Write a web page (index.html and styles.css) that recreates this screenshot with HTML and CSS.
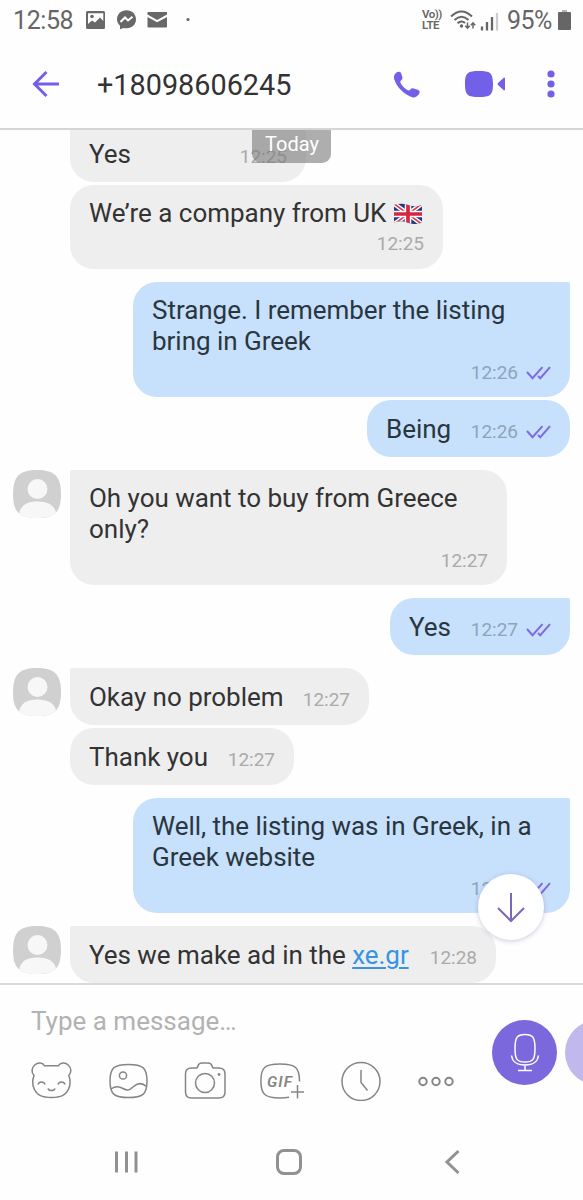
FILE: index.html
```html
<!DOCTYPE html>
<html lang="en">
<head>
<meta charset="utf-8">
<title>Chat</title>
<link rel="stylesheet" href="styles.css">
</head>
<body>
<svg class="defs" width="0" height="0">
  <defs>
    <symbol id="checks" viewBox="0 0 26 16"><path d="M2 7 7.500 13.200 17.500 2.200M13 11l2.300 2.200L25 2.200" fill="none" stroke="#7f6be0" stroke-width="2"/></symbol>
    <symbol id="person" viewBox="0 0 48 48"><path d="M24 0C41 0 48 6 48 24c0 10-2 15-5 18.500C38 47 33 48 24 48s-14-1-19-5.500C2 39 0 34 0 24 0 6 7 0 24 0Z" fill="#d0d0d0"/><circle cx="24.500" cy="19" r="10" fill="#f7f7f7"/><path d="M6 43.500C8 35 14 31.500 24.500 31.500S41 35 43 42.500C38 47 33 48 24 48S11 47.500 6 43.500Z" fill="#f7f7f7"/></symbol>
  </defs>
</svg>
<main class="screen">
  <header class="status">
    <span class="clock">12:58</span>
    <svg class="status-left" width="110" height="24" viewBox="0 0 110 24">
      <path fill="#686868" fill-rule="evenodd" d="M2.500 3h16q1.500 0 1.500 1.500v15q0 1.500-1.500 1.500h-16q-1.500 0-1.500-1.500v-15Q1 3 2.500 3Zm.5 2.300V16l4-3.500 3 2 5-5 3.300 3.500V5.300Z"/><circle cx="7" cy="8.500" r="1.800" fill="#686868"/>
      <path fill="#686868" d="M41.500 2.200c5.500 0 9.500 3.900 9.500 9.100s-4 9-9.500 9c-1 0-2-.1-2.900-.4L35 21.300v-3.600c-2-1.600-3-3.900-3-6.400 0-5.200 4-9.100 9.500-9.100Z"/><path d="m35.500 14 4.500-4.500 3 3 4.500-3.700" fill="none" stroke="#fff" stroke-width="2"/>
      <path fill="#686868" d="M62.500 4H82v2.500L72.200 12 62.500 6.500Zm0 5 9.700 5.300L82 9v9.500q0 1-1 1H63.500q-1 0-1-1Z"/>
      <circle cx="103" cy="11.500" r="1.600" fill="#686868"/>
    </svg>
    <span class="volte"><span>Vo))</span><span>LTE</span></span>
    <svg class="signal" width="52" height="24" viewBox="0 0 52 24">
      <g fill="none" stroke="#666" stroke-width="2"><path d="M1 8.500Q11.500-1.500 22 8.500M4.500 12Q11.500 5.500 18.500 12M7.500 15.300q4-3.600 7.500-.3"/></g>
      <circle cx="11.500" cy="18" r="1.700" fill="#666"/>
      <path d="M17.500 14.500V20m-2.200-2.300 2.200 2.500 2.200-2.500M23 20.500V15m-2.200 2.300 2.200-2.500 2.200 2.500" fill="none" stroke="#666" stroke-width="1.500"/>
      <path d="M32 18.500v4M37 14v8.500M42 9v13.500" stroke="#666" stroke-width="2.300"/><path d="M47 5v17.500" stroke="#ccc" stroke-width="2.300"/>
    </svg>
    <span class="percent">95%</span>
    <svg class="battery" width="13" height="20" viewBox="0 0 13 20"><path fill="#b5b5b5" d="M4 0h5v3H4z"/><rect y="2" width="13" height="18" rx="1" fill="#666"/></svg>
  </header>

  <nav class="topbar">
    <svg class="back" width="28" height="28" viewBox="0 0 28 28"><path d="M27 14H3M14.500 2 2.500 14l12 12" fill="none" stroke="#7360e8" stroke-width="3"/></svg>
    <h1 class="number">+18098606245</h1>
    <svg class="phone" width="27" height="27" viewBox="0 0 27 27"><path fill="#7360e8" d="M1.200 4.500C2 2 4 .7 6 .7c1.400 0 1.900.7 2.400 2.200l.9 3.200c.4 1.600-.1 2.600-1.300 3.400-1 .7-.8 1.600-.1 2.900 1.700 2.800 3.700 4.900 6.600 6.700 1.300.7 2 .6 2.800-.5.900-1.200 2-1.600 3.400-1.200l4 1.400c1.400.5 2 1.200 1.900 2.500-.4 2.300-2.300 4.300-4.800 5-1.100.3-2.200.2-3.300-.3C9.500 22.300 3.800 16 1.200 8.300.8 7 .8 5.800 1.200 4.500Z"/></svg>
    <svg class="video" width="42" height="28" viewBox="0 0 42 28"><path fill="#7360e8" d="M15 1c11 0 14 1.500 14 13s-3 13-14 13S1 25.500 1 14 4 1 15 1ZM40 7.500q1 0 1 1v11q0 1-1 1L34 15q-1-1 0-2Z"/></svg>
    <svg class="more" width="8" height="28" viewBox="0 0 8 28"><g fill="#7360e8"><circle cx="4" cy="4" r="3.600"/><circle cx="4" cy="14" r="3.600"/><circle cx="4" cy="24" r="3.600"/></g></svg>
  </nav>

  <section class="chat">
    <div class="day">Today</div>
    <div class="row first"><div class="bubble single w236"><p>Yes</p><time>12:25</time></div></div>
    <div class="row"><div class="bubble w373"><p>We’re a company from UK <svg class="flag" width="30" height="22" viewBox="0 0 30 22"><defs><clipPath id="wave"><path d="M1 2Q8-.5 15 2t14 0v17.500q-7 3-14 .3T1 19.500Z"/></clipPath></defs><g clip-path="url(#wave)"><path fill="#26377e" d="M0 0h30v22H0z"/><path d="m0 0 30 22M30 0 0 22" stroke="#fff" stroke-width="4.500"/><path d="m0 0 30 22M30 0 0 22" stroke="#d63b50" stroke-width="1.700"/><path d="M15 0v22M0 11h30" stroke="#fff" stroke-width="6.500"/><path d="M15 0v22M0 11h30" stroke="#d52640" stroke-width="3.700"/></g></svg></p><time>12:25</time></div></div>
    <div class="row out turn"><div class="bubble head w437"><p>Strange. I remember the listing<br>bring in Greek</p><time>12:26<svg class="checks"><use href="#checks"/></svg></time></div></div>
    <div class="row out"><div class="bubble single w203"><p>Being</p><time>12:26<svg class="checks"><use href="#checks"/></svg></time></div></div>
    <div class="row turn"><svg class="avatar"><use href="#person"/></svg><div class="bubble head w437"><p>Oh you want to buy from Greece<br>only?</p><time>12:27</time></div></div>
    <div class="row out turn"><div class="bubble head-round single w180"><p>Yes</p><time>12:27<svg class="checks"><use href="#checks"/></svg></time></div></div>
    <div class="row turn"><svg class="avatar"><use href="#person"/></svg><div class="bubble head single w299"><p>Okay no problem</p><time>12:27</time></div></div>
    <div class="row"><div class="bubble single w224"><p>Thank you</p><time>12:27</time></div></div>
    <div class="row out turn"><div class="bubble head w437"><p>Well, the listing was in Greek, in a<br>Greek website</p><time>12:28<svg class="checks"><use href="#checks"/></svg></time></div></div>
    <div class="row turn"><svg class="avatar"><use href="#person"/></svg><div class="bubble head single w426"><p>Yes we make ad in the <a class="link">xe.gr</a></p><time>12:28</time></div></div>
    <div class="jump"><svg width="32" height="34" viewBox="0 0 32 34"><path d="M16 3v28M3 18l13 13 13-13" fill="none" stroke="#7b68bd" stroke-width="2"/></svg></div>
  </section>

  <section class="composer">
    <div class="entry">
      <div class="placeholder">Type a message…</div>
      <div class="tools">
        <svg width="44" height="40" viewBox="0 0 44 40"><path d="M15.500 4.800h14C31 1.500 36 1 39.300 4s3.300 7.500.5 10.500c1.500 4 1.700 9 0 13-3 7-8 9-17.300 9s-14.500-2-17.500-9c-1.700-4-1.500-9 0-13C2.200 11.500 2.400 7 5.700 4s8.300-2.500 9.800.8ZM9 23.500c1-3.500 6-3.500 7 0M29 23.500c1-3.500 6-3.500 7 0M19 27.500c1 2.800 6 2.800 7 0"/></svg>
        <svg width="44" height="40" viewBox="0 0 44 40"><path d="M22.500 3.500c14 0 18.500 3 18.500 16.500s-4.500 16.500-18.500 16.500S4 33.500 4 20 8.500 3.500 22.500 3.500ZM5 28c4-3 8-3 12-.5 4 2.300 6 2.300 10-1.500s9-4.500 13.500-.5"/><circle cx="17" cy="14.500" r="3.600"/></svg>
        <svg width="44" height="40" viewBox="0 0 44 40"><path d="M8.500 7h4.500q1.500 0 2-2 .7-3 4-3h6q3.300 0 4 3 .5 2 2 2h5q6 0 6 6v18q0 6-6 6H8.500q-6 0-6-6V13q0-6 6-6Z"/><circle cx="22" cy="22" r="9.500"/><circle cx="36" cy="13.500" r=".7"/></svg>
        <svg width="46" height="40" viewBox="0 0 46 40"><path d="M39.500 20.500c0-14-4-17.500-19.500-17.500S.9 6.500.9 20 5 37 20 37q5 0 9-.8M37.500 24V37.500M31 31h13"/><text class="gif" x="7" y="25.500" textLength="25">GIF</text></svg>
        <svg width="44" height="40" viewBox="0 0 44 40"><circle cx="22" cy="20.500" r="19"/><path d="M22 9v12.500l6.500 8"/></svg>
        <svg width="44" height="40" viewBox="0 0 44 40"><g stroke-width="2"><circle cx="7" cy="20.500" r="3.700"/><circle cx="20" cy="20.500" r="3.700"/><circle cx="33" cy="20.500" r="3.700"/></g></svg>
      </div>
    </div>
    <div class="mic"><svg width="30" height="40" viewBox="0 0 30 40" fill="none" stroke="#fff" stroke-width="1.500"><path d="M15 1.500c8 0 10 3 10 14s-2 13.500-10 13.500S5 26.500 5 15.500s2-14 10-14ZM1.500 22.500C2.500 29 6 32 15 32s12.500-3 13.500-9.500M15 32v5.500M8 37.500h14"/></svg></div>
    <div class="next"></div>
  </section>

  <footer class="system">
    <svg width="26" height="28" viewBox="0 0 26 28"><path d="M3.500 3.500v21M13.500 3.500v21M23 3.500v21"/></svg>
    <svg class="home" width="28" height="28" viewBox="0 0 28 28"><rect x="2.500" y="2.500" width="23" height="23" rx="6.500"/></svg>
    <svg width="18" height="28" viewBox="0 0 18 28"><path d="M15.500 3 4 14l11.500 11"/></svg>
  </footer>
</main>
</body>
</html>
```
FILE: styles.css
```css
* { box-sizing: border-box; }
body { margin: 0; background: #fefefe; font-family: Roboto, "Liberation Sans", sans-serif; color: #333; }
p, h1 { margin: 0; font-weight: 400; }
svg { flex: none; display: block; }
.defs { position: absolute; }
.screen { width: 583px; height: 1200px; display: flex; flex-direction: column; overflow: hidden; }
.status { height: 40px; display: flex; align-items: center; padding: 0 12px 0 13px; color: #666; }
.clock { width: 72px; font-size: 25px; letter-spacing: -.4px; }
.status-left { margin-top: -1px; }
.volte { margin-left: auto; width: 24px; display: flex; flex-direction: column; font-size: 11.5px; line-height: 11px; font-weight: 600; letter-spacing: -.5px; margin-right: 4px; }
.signal { margin-right: 5px; }
.percent { font-size: 25px; letter-spacing: -.6px; width: 51px; }
.topbar { height: 90px; display: flex; align-items: center; padding: 0 28px 0 32px; border-bottom: 2px solid #d5d5d5; }
.number { font-size: 28.8px; line-height: 34px; width: 204px; margin-left: 37px; margin-top: 2px; }
.phone { margin-left: auto; }
.video { margin-left: 44px; }
.more { margin-left: 41px; }
.chat { height: 853px; position: relative; overflow: hidden; padding: 0 13px; display: flex; flex-direction: column; gap: 3px; }
.row { display: flex; flex: none; padding-left: 57px; }
.first { margin-top: -5px; }
.first .bubble { border-radius: 0 0 24px 24px; }
.turn { margin-top: 10px; }
.out { justify-content: flex-end; }
.avatar { width: 48px; height: 48px; margin-left: -57px; margin-right: 9px; }
.bubble { display: flex; flex-direction: column; background: #eee; border-radius: 24px; padding: 13px 19px 10px 19px; font-size: 26px; line-height: 31px; letter-spacing: -.03px; white-space: nowrap; }
.head { border-top-left-radius: 2px; }
.out .bubble { background: #c7e0fc; color: #293640; }
.out .head { border-radius: 24px 2px 24px 24px; }
.out .head-round { border-top-right-radius: 2px; }
.single { height: 57px; padding-top: 14px; flex-direction: row; justify-content: space-between; align-items: baseline; }
time { display: flex; align-items: center; align-self: flex-end; font-size: 19px; line-height: 30px; height: 30px; margin-top: 0; color: #aaa; }
p { padding-bottom: 0; }
.single time { align-self: baseline; line-height: 22px; height: 22px; }
.head:not(.single) time { margin-top: 1px; height: 29px; }
.bubble:not(.single) { padding-bottom: 10px; }
.out time { color: #8ea4ba; }
.checks { width: 26px; height: 16px; margin-left: 7px; }
.flag { display: inline-block; vertical-align: -3px; }
.w180 { width: 180px; } .w203 { width: 203px; } .w224 { width: 224px; } .w236 { width: 236px; }
.w299 { width: 299px; } .w373 { width: 373px; } .w426 { width: 426px; } .w437 { width: 437px; }
.link { color: #3694e4; text-decoration: underline; text-decoration-thickness: 2px; text-underline-offset: 3px; }
.day { position: absolute; z-index: 1; top: 0; left: 252px; width: 79px; height: 33px; border-radius: 0 0 9px 9px; background: rgba(125,125,125,.62); color: #fff; font-size: 20px; line-height: 29px; padding-left: 1px; text-align: center; }
.jump { position: absolute; right: 39px; top: 744px; width: 66px; height: 66px; border-radius: 50%; background: #fff; display: flex; align-items: center; justify-content: center; box-shadow: 0 1px 5px rgba(90,70,150,.3); }
.composer { height: 137px; border-top: 2px solid #d9d9d9; display: flex; align-items: flex-start; overflow: hidden; }
.entry { width: 492px; flex: none; padding: 19px 0 0 29px; }
.placeholder { color: #b2b2b2; font-size: 26px; line-height: 34px; padding-left: 2px; }
.tools { display: flex; margin-top: 23px; gap: 33px; fill: none; stroke: #858585; stroke-width: 1.500px; }
.gif { font: italic 600 15.500px Roboto, sans-serif; fill: #858585; stroke: none; }
.mic, .next { flex: none; width: 65px; height: 65px; margin-top: 35px; border-radius: 50%; background: #7b68dc; }
.mic { display: flex; align-items: center; justify-content: center; }
.next { margin-left: 8px; background: #c1b9ed; }
.system { height: 80px; display: flex; justify-content: space-between; align-items: center; padding: 4px 122px 0 113px; fill: none; stroke: #919191; stroke-width: 3px; }
.home { margin-right: 4px; }
```
